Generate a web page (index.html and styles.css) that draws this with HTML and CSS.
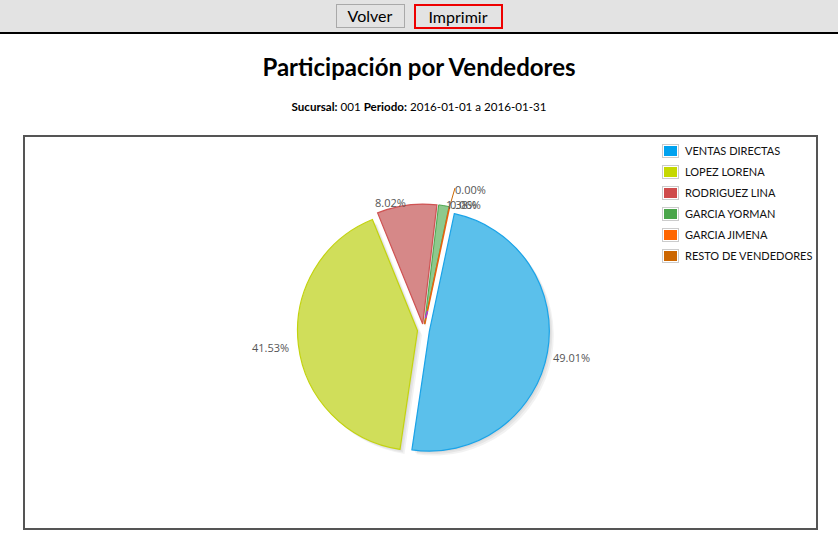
FILE: index.html
```html
<!DOCTYPE html>
<html lang="es">
<head>
<meta charset="utf-8">
<title>Participación por Vendedores</title>
<link rel="stylesheet" href="styles.css">
</head>
<body>
<div class="toolbar">
  <button class="btn">Volver</button>
  <button class="btn btn-print">Imprimir</button>
</div>
<h1 class="title">Participación por Vendedores</h1>
<p class="subtitle"><b>Sucursal:</b> 001 <b>Periodo:</b> 2016-01-01 a 2016-01-31</p>
<div class="chart">
  <svg class="pie" width="791" height="391" viewBox="25 137 791 391" xmlns="http://www.w3.org/2000/svg">
    <g class="shadow">
      <g transform="translate(1.5,1.5)"><path d="M429.4 331.1 L454.3 213.7 A120 120 0 0 1 411.9 449.8 Z"/><path d="M417.5 330.7 L400 449.4 A120 120 0 0 1 372.4 219.5 Z"/><path d="M422.7 324.05 L377.6 212.9 A120 120 0 0 1 436.9 204.9 Z"/></g>
      <g transform="translate(3,3)"><path d="M429.4 331.1 L454.3 213.7 A120 120 0 0 1 411.9 449.8 Z"/><path d="M417.5 330.7 L400 449.4 A120 120 0 0 1 372.4 219.5 Z"/><path d="M422.7 324.05 L377.6 212.9 A120 120 0 0 1 436.9 204.9 Z"/></g>
      <g transform="translate(4.5,4.5)"><path d="M429.4 331.1 L454.3 213.7 A120 120 0 0 1 411.9 449.8 Z"/><path d="M417.5 330.7 L400 449.4 A120 120 0 0 1 372.4 219.5 Z"/></g>
    </g>
    <path class="s-blue" d="M429.4 331.1 L454.3 213.7 A120 120 0 0 1 411.9 449.8 Z"/>
    <path class="s-yellow" d="M417.5 330.7 L400 449.4 A120 120 0 0 1 372.4 219.5 Z"/>
    <path class="s-red" d="M422.7 324.05 L377.6 212.9 A120 120 0 0 1 436.9 204.9 Z"/>
    <path class="s-green" d="M424.5 324.1 L438.7 204.9 A120 120 0 0 1 449 206.6 Z"/>
    <line class="s-orange" x1="424.7" y1="324.1" x2="449.6" y2="206.5"/>
    <line class="s-rest" x1="449.8" y1="206" x2="455" y2="188"/>
    <line class="s-purple" x1="425.5" y1="318" x2="427.5" y2="311"/>
    <text class="lbl" x="553" y="362">49.01%</text>
    <text class="lbl" x="252" y="352">41.53%</text>
    <text class="lbl" x="375" y="207">8.02%</text>
    <text class="lbl" x="455" y="194">0.00%</text>
    <text class="lbl" x="446" y="209">1.38%</text>
    <text class="lbl" x="450" y="209">0.06%</text>
  </svg>
  <ul class="legend">
    <li class="legend-row"><span class="swatch"><span class="swatch-fill c-blue"></span></span>VENTAS DIRECTAS</li>
    <li class="legend-row"><span class="swatch"><span class="swatch-fill c-yellow"></span></span>LOPEZ LORENA</li>
    <li class="legend-row"><span class="swatch"><span class="swatch-fill c-red"></span></span>RODRIGUEZ LINA</li>
    <li class="legend-row"><span class="swatch"><span class="swatch-fill c-green"></span></span>GARCIA YORMAN</li>
    <li class="legend-row"><span class="swatch"><span class="swatch-fill c-orange"></span></span>GARCIA JIMENA</li>
    <li class="legend-row"><span class="swatch"><span class="swatch-fill c-rest"></span></span>RESTO DE VENDEDORES</li>
  </ul>
</div>
</body>
</html>
```

FILE: styles.css
```css
html, body {
  margin: 0;
  padding: 0;
  background: #ffffff;
  font-family: "Lato", "Open Sans", sans-serif;
  color: #000;
}

.toolbar {
  background: #e3e3e3;
  border-bottom: 2px solid #000;
  display: flex;
  justify-content: center;
  align-items: flex-start;
  gap: 9px;
  padding-top: 4px;
  height: 28px;
}

.btn {
  font-family: "Lato", "Open Sans", sans-serif;
  font-size: 16px;
  color: #000;
  background: #e3e3e3;
  border: 1px solid #a9a9a9;
  width: 69px;
  height: 24px;
  padding: 0;
  margin: 0;
  line-height: 20px;
}

.btn-print {
  border: 2px solid #ee0000;
  width: 89px;
  height: 25px;
}

.title {
  margin: 18px 0 0;
  font-size: 24px;
  line-height: 30px;
  font-weight: 700;
  text-align: center;
}

.subtitle {
  margin: 17px 0 0;
  font-size: 11.6px;
  line-height: 16px;
  text-align: center;
}

.chart {
  position: relative;
  margin: 20px 0 0 23px;
  width: 791px;
  height: 391px;
  border: 2px solid #555555;
}

.pie {
  display: block;
}

.shadow path {
  fill: rgba(0, 0, 0, 0.05);
}

.s-blue { fill: #5bc0eb; stroke: #1aa3e8; stroke-width: 1.2; }
.s-yellow { fill: #d0de5a; stroke: #c3d30f; stroke-width: 1.2; }
.s-red { fill: #d68888; stroke: #cf5353; stroke-width: 1.2; }
.s-green { fill: #8dc98d; stroke: #4ea64e; stroke-width: 1; }
.s-orange { stroke: #e8620e; stroke-width: 1.6; }
.s-rest { stroke: #cc6600; stroke-width: 1; }
.s-purple { stroke: #a040e0; stroke-width: 1.5; }

.lbl {
  font-family: "Open Sans", "Lato", sans-serif;
  font-size: 11px;
  fill: #555555;
}

.legend {
  position: absolute;
  top: 3px;
  left: 637px;
  margin: 0;
  padding: 0;
  list-style: none;
}

.legend-row {
  display: flex;
  align-items: center;
  gap: 6px;
  height: 21px;
  font-size: 11px;
  color: #111;
  white-space: nowrap;
}

.swatch {
  display: inline-block;
  border: 1px solid #cccccc;
  padding: 1px;
  background: #fff;
}

.swatch-fill {
  display: block;
  width: 13px;
  height: 10px;
}

.c-blue { background: #00a2ef; }
.c-yellow { background: #c5d800; }
.c-red { background: #cf4b4b; }
.c-green { background: #4aa54a; }
.c-orange { background: #ff6600; }
.c-rest { background: #cc6600; }
```
